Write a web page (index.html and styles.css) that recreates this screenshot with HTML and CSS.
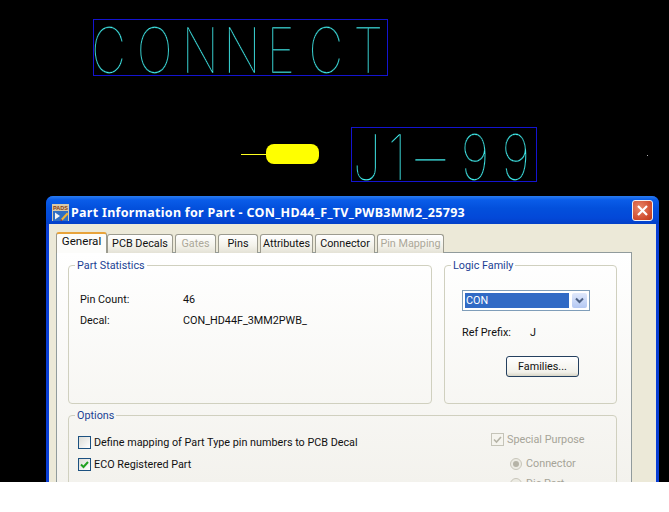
FILE: index.html
```html
<!DOCTYPE html>
<html lang="en">
<head>
<meta charset="utf-8">
<title>Part Information for Part</title>
<link rel="stylesheet" href="styles.css">
</head>
<body>
<main class="screen">
  <svg class="cad" width="669" height="482" viewBox="0 0 669 482" aria-label="Part decal canvas">
    <rect class="box" x="93.5" y="19.5" width="294" height="56"/>
    <rect class="box" x="351.5" y="127.5" width="185" height="54"/>
    <g transform="scale(0.76 1)">
      <text class="cad-text" y="73" x="120 180 239 294 351 406 465">CONNECT</text>
    </g>
    <g transform="scale(0.8 1)">
      <text class="cad-text" y="180" x="441 485">J1<tspan class="cad-dash" x="519" dy="3">–</tspan><tspan x="576 627" dy="-3">99</tspan></text>
    </g>
    <line class="pin" x1="241" y1="154.5" x2="268" y2="154.5"/>
    <rect class="pad" x="266" y="144" width="53" height="20" rx="8"/>
    <rect class="dot" x="647" y="155" width="1" height="1"/>
  </svg>

  <section class="window">
    <header class="titlebar">
      <svg class="app-icon" width="17" height="17" viewBox="0 0 17 17">
        <rect x="0" y="0" width="17" height="17" fill="#d9c9a8"/>
        <text class="app-icon-text" x="8.5" y="6">PADS</text>
        <rect x="1" y="7" width="15" height="10" fill="#2f6fc4"/>
        <path d="M3 8.5v7l5-3.5z" fill="#f4f4f4"/>
        <path d="M9 15l6-6.5 1.5 1.5-6 6.5z" fill="#f2b632"/>
        <path d="M9 15l1.5 1.5-2 .5z" fill="#b03020"/>
      </svg>
      <h1 class="title">Part Information for Part - CON_HD44_F_TV_PWB3MM2_25793</h1>
      <button class="close" type="button" aria-label="Close">
        <svg width="13" height="13" viewBox="0 0 13 13"><path d="M2 2l9 9M11 2l-9 9" stroke="#fff" stroke-width="2.2" fill="none"/></svg>
      </button>
    </header>
    <div class="client">
      <nav class="tabs">
        <span class="tab active w-general">General</span>
        <span class="tab w-decals">PCB Decals</span>
        <span class="tab off w-gates">Gates</span>
        <span class="tab w-pins">Pins</span>
        <span class="tab w-attr">Attributes</span>
        <span class="tab w-conn">Connector</span>
        <span class="tab off w-map">Pin Mapping</span>
      </nav>
      <div class="panel">
        <div class="top-row">
          <fieldset class="group stats">
            <legend>Part Statistics</legend>
            <div class="facts">
              <span>Pin Count:</span><span>46</span>
              <span>Decal:</span><span>CON_HD44F_3MM2PWB_</span>
            </div>
          </fieldset>
          <fieldset class="group logic">
            <legend>Logic Family</legend>
            <div class="logic-body">
              <div class="select">
                <span class="select-value">CON</span>
                <span class="select-arrow">
                  <svg width="9" height="7" viewBox="0 0 9 7"><path d="M1 1.5l3.5 3.5 3.5-3.5" stroke="#4d6185" stroke-width="2" fill="none"/></svg>
                </span>
              </div>
              <div class="ref"><span class="ref-label">Ref Prefix:</span><span>J</span></div>
              <button class="btn" type="button">Families...</button>
            </div>
          </fieldset>
        </div>
        <fieldset class="group options">
          <legend>Options</legend>
          <div class="options-body">
            <div class="checks">
              <div class="check-row"><span class="cb"></span>Define mapping of Part Type pin numbers to PCB Decal</div>
              <div class="check-row"><span class="cb">
                <svg width="11" height="11" viewBox="0 0 11 11"><path d="M2 5.5l2.5 2.5 4.5-5" stroke="#21a121" stroke-width="2" fill="none"/></svg>
              </span>ECO Registered Part</div>
            </div>
            <div class="purpose">
              <div class="check-row off"><span class="cb cb-off">
                <svg width="11" height="11" viewBox="0 0 11 11"><path d="M2 5.5l2.5 2.5 4.5-5" stroke="#b5b3a6" stroke-width="1.6" fill="none"/></svg>
              </span>Special Purpose</div>
              <div class="radio-row off"><span class="rb"><span class="rb-dot"></span></span>Connector</div>
              <div class="radio-row off"><span class="rb"></span>Die Part</div>
            </div>
          </div>
        </fieldset>
      </div>
    </div>
  </section>
</main>
</body>
</html>
```

FILE: styles.css
```css
* { box-sizing: border-box; }
html, body { margin: 0; padding: 0; background: #fff; }
body { width: 669px; height: 512px; overflow: hidden; font-family: Roboto, "Liberation Sans", sans-serif; font-size: 10.8px; color: #111; }
.screen { position: relative; width: 669px; height: 482px; background: #000; overflow: hidden; }
.cad { position: absolute; left: 0; top: 0; display: block; }
.box { fill: none; stroke: #1414d0; stroke-width: 1; }
.cad-text { font-family: Inter, Roboto, sans-serif; font-size: 63px; font-weight: 100; fill: #40eaea; stroke: #000; stroke-width: .3px; }
.cad-dash { font-size: 75px; }
.pin { stroke: #ffff20; stroke-width: 1; }
.pad { fill: #ffff00; }
.dot { fill: #b0b0b0; }

.window { position: absolute; left: 46px; top: 196px; width: 613px; height: 310px; display: flex; flex-direction: column; border-radius: 7px 7px 0 0; background: #0a3fd6; }
.titlebar { height: 28px; flex: none; display: flex; align-items: center; padding: 4px 6px 0 6px; border-radius: 7px 7px 0 0; background: linear-gradient(#2a7cf0 0, #0a5ce8 4px, #0350dc 12px, #0348d8 22px, #0340c8 100%); }
.app-icon { flex: none; margin-right: 2px; }
.app-icon-text { font-family: "Liberation Sans", sans-serif; font-size: 5.5px; font-weight: 700; fill: #8a3a10; text-anchor: middle; }
.title { flex: 1; margin: 0; font-family: "Noto Sans", sans-serif; font-size: 12.5px; font-weight: 700; letter-spacing: .3px; color: #fff; white-space: nowrap; }
.close { width: 21px; height: 21px; flex: none; padding: 0; margin-top: -3px; display: flex; align-items: center; justify-content: center; border: 1px solid #f2f2f2; border-radius: 3px; background: radial-gradient(circle at 35% 35%, #e8876a, #cf4a2c 70%, #b93a1c); }

.client { flex: 1; margin: 0 3px; padding: 8px 24px 0 7px; background: #ece9d8; }
.tabs { display: flex; height: 20px; position: relative; z-index: 1; }
.tab { height: 19px; margin-top: 2px; margin-right: 2px; padding-top: 2px; text-align: center; white-space: nowrap; border: 1px solid #9c9b8f; border-bottom: 0; border-radius: 3px 3px 0 0; background: linear-gradient(#fff, #f3f2ea 60%, #e4e2d6); }
.tab.active { height: 21px; margin-top: 0; margin-right: 0; padding-top: 0; border-top: 2px solid #e8a33a; background: #fcfcfa; font-size: 11.6px; }
.tab.off { color: #aca899; }
.w-general { width: 51px; }
.w-decals { width: 66px; }
.w-gates { width: 41px; }
.w-pins { width: 40px; }
.w-attr { width: 53px; }
.w-conn { width: 60px; }
.w-map { width: 67px; }

.panel { height: 270px; padding: 5px 11px 0; border: 1px solid #919b9c; background: linear-gradient(#fff, #f3f2ed 230px); }
.top-row { display: flex; gap: 12px; }
.group { margin: 0; padding: 0; min-width: 0; border: 1px solid #d0d0bf; border-radius: 4px; }
.group legend { padding: 0 2px; margin-left: 6px; height: 14px; line-height: 16px; color: #1b3f94; }
.stats { width: 364px; height: 146px; }
.logic { width: 173px; height: 146px; }
.facts { display: grid; grid-template-columns: 103px 1fr; grid-auto-rows: 21px; align-items: center; padding: 17px 10px 0 11px; }
.logic-body { padding: 18px 10px 0 17px; }
.select { display: flex; width: 128px; height: 21px; padding: 2px; border: 1px solid #7f9db9; background: #fff; }
.select-value { flex: 1; margin-right: 3px; padding-left: 1px; line-height: 15px; color: #fff; background: #316ac5; }
.select-arrow { width: 15px; display: flex; align-items: center; justify-content: center; border-radius: 2px; background: linear-gradient(#dfe8fb, #b4c8f3); }
.ref { display: flex; margin-top: 15px; height: 14px; line-height: 14px; }
.ref-label { width: 68px; }
.btn { display: block; width: 73px; height: 21px; margin: 16px 0 0 44px; padding: 0; font: inherit; color: #111; border: 1px solid #25405f; border-radius: 3px; background: linear-gradient(#fff, #f2f1ea 80%, #d8d5c6); }

.options { width: 549px; height: 120px; margin-top: 4px; }
.options-body { display: flex; justify-content: space-between; padding: 14px 0 0 9px; }
.checks { display: flex; flex-direction: column; gap: 9px; }
.check-row { display: flex; align-items: center; gap: 3px; height: 13px; white-space: nowrap; }
.cb { width: 13px; height: 13px; flex: none; display: flex; align-items: center; justify-content: center; border: 1px solid #1c5180; background: linear-gradient(135deg, #dcdcd6, #fff); }
.cb-off { border-color: #c5c4b8; background: #f5f4ee; }
.off { color: #a6a498; }
.purpose { position: relative; top: -3px; width: 125px; display: flex; flex-direction: column; gap: 11px; }
.radio-row { display: flex; align-items: center; gap: 4px; height: 13px; margin-left: 19px; margin-top: 0; white-space: nowrap; }
.radio-row + .radio-row { margin-top: -4px; }
.rb { width: 12px; height: 12px; flex: none; display: flex; align-items: center; justify-content: center; border: 1px solid #c8c6ba; border-radius: 50%; background: #ecebe3; }
.rb-dot { width: 6px; height: 6px; border-radius: 50%; background: #b5b3a6; }
```
